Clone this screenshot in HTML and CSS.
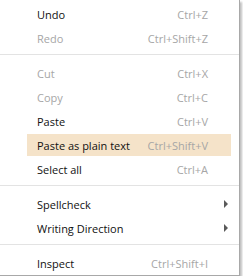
FILE: index.html
```html
<!DOCTYPE html>
<html>
<head>
<meta charset="utf-8">
<link rel="stylesheet" href="styles.css">
</head>
<body>
<div class="menu">
  <div class="item"><span class="label">Undo</span><span class="key">Ctrl+Z</span></div>
  <div class="item disabled"><span class="label">Redo</span><span class="key">Ctrl+Shift+Z</span></div>
  <div class="sep"></div>
  <div class="item disabled"><span class="label">Cut</span><span class="key">Ctrl+X</span></div>
  <div class="item disabled"><span class="label">Copy</span><span class="key">Ctrl+C</span></div>
  <div class="item"><span class="label">Paste</span><span class="key">Ctrl+V</span></div>
  <div class="item hover"><span class="label">Paste as plain text</span><span class="key">Ctrl+Shift+V</span></div>
  <div class="item"><span class="label">Select all</span><span class="key">Ctrl+A</span></div>
  <div class="sep"></div>
  <div class="item"><span class="label">Spellcheck</span><span class="arrow"></span></div>
  <div class="item"><span class="label">Writing Direction</span><span class="arrow"></span></div>
  <div class="sep"></div>
  <div class="item"><span class="label">Inspect</span><span class="key">Ctrl+Shift+I</span></div>
</div>
</body>
</html>
```

FILE: styles.css
```css
html, body {
  margin: 0;
  padding: 0;
  background: #ffffff;
}

.menu {
  width: 240px;
  box-sizing: border-box;
  padding: 2px 0 0 0;
  height: 276px;
  background: #ffffff;
  border-right: 1px solid #a8a8a8;
  border-bottom: 1px solid #a8a8a8;
  box-shadow: 2px 2px 2px rgba(0, 0, 0, 0.25);
  font-family: "Open Sans", "Noto Sans", sans-serif;
  font-size: 11px;
  color: #111111;
}

.item {
  height: 24px;
  display: flex;
  align-items: center;
  margin: 0 8px 0 27px;
  padding: 0 23px 0 10px;
  white-space: nowrap;
}

.item .label {
  flex: 1;
}

.item .key {
  color: #a6a6a6;
}

.item.disabled .label {
  color: #a6a6a6;
}

.item.hover {
  background: #f5e3c9;
  height: 22px;
  margin-top: 1px;
  margin-bottom: 1px;
}

.arrow {
  width: 0;
  height: 0;
  border-top: 4px solid transparent;
  border-bottom: 4px solid transparent;
  border-left: 4px solid #5a5a5a;
  margin-right: -20px;
}

.sep {
  height: 1px;
  background: #e3e3e3;
  margin: 4px 0 6px 0;
}
```
